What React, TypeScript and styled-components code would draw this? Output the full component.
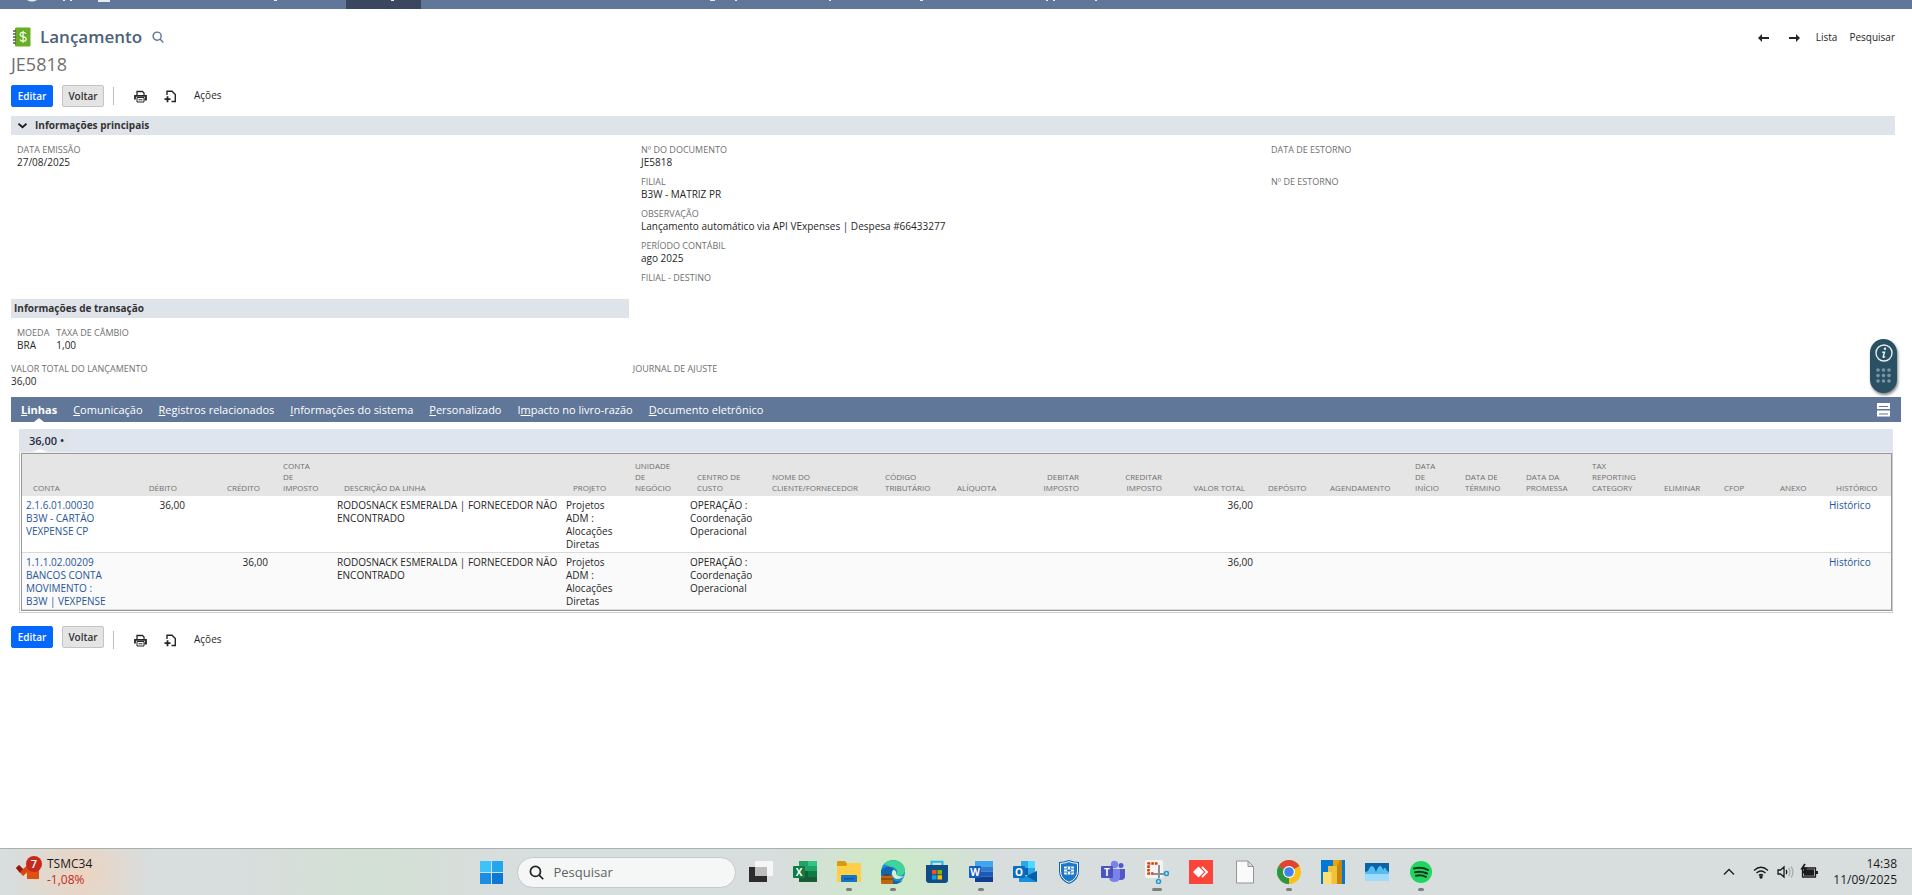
import React from 'react';
import styled, { createGlobalStyle, css } from 'styled-components';

const GlobalStyle = createGlobalStyle`
    * {
        box-sizing: border-box;
    }
    body {
        margin: 0;
        background: #fff;
        color: #262626;
        font-family: 'Open Sans', 'Noto Sans', sans-serif;
        font-size: 10px;
        line-height: 13px;
    }
    button, input {
        font-family: inherit;
    }
    svg {
        display: block;
    }
`;

const Page = styled.div`
    display: flex;
    flex-direction: column;
    min-height: 100vh;
    position: relative;
`;

const TopBar = styled.nav`
    height: 9px;
    background: #607799;
    overflow: hidden;
`;

const Content = styled.main`
    flex: 1;
    padding: 0 11px;
`;

const HeaderRow = styled.header`
    display: flex;
    justify-content: space-between;
    align-items: center;
    height: 27px;
    margin: 14px 6px 0 2px;
`;

const TitleGroup = styled.div`
    display: flex;
    align-items: center;
`;

const Title = styled.h1`
    margin: 0 10px 0 9px;
    font-size: 17px;
    line-height: 24px;
    font-weight: 600;
    color: #4d5f79;
`;

const Pager = styled.div`
    display: flex;
    align-items: center;
    gap: 12px;
    padding-top: 2px;
`;

const IconButton = styled.button`
    display: flex;
    padding: 0;
    border: 0;
    background: none;
    color: #262626;
`;

const PagerLink = styled.a`
    color: #262626;
    text-decoration: none;
    font-size: 10px;
`;

const RecordName = styled.div`
    height: 29px;
    margin-bottom: 6px;
    font-size: 18px;
    line-height: 29px;
    color: #6f6f6f;
`;

const Actions = styled.div`
    display: flex;
    align-items: center;
    height: 22px;
`;

const ActionButton = styled.button<{ $primary?: boolean }>`
    height: 22px;
    width: 42px;
    padding: 0;
    margin-right: 9px;
    border: 1px solid #c4c4c4;
    border-radius: 2px;
    background: #e4e4e4;
    color: #333;
    font-size: 10px;
    line-height: 20px;
    font-weight: 600;
    ${props => props.$primary && css`
        border-color: #0568fd;
        background: #0568fd;
        color: #fff;
    `}
`;

const Tools = styled.div<{ $low?: boolean }>`
    display: flex;
    align-items: center;
    height: 18px;
    padding-left: 20px;
    gap: 17px;
    border-left: 1px solid #c0c0c0;
    ${props => props.$low && css`
        align-self: flex-end;
        margin-bottom: -1px;
    `}
`;

const MenuButton = styled(IconButton)`
    padding-bottom: 2px;
    font-size: 10px;
    line-height: 13px;
`;

const SectionTitle = styled.h2<{ $half?: boolean }>`
    display: flex;
    align-items: center;
    height: 19px;
    margin: 0;
    padding: 0 7px;
    gap: 8px;
    background: #dfe3ea;
    font-size: 10px;
    line-height: 19px;
    font-weight: 700;
    color: #333;
    ${props => props.$half && css`
        width: calc(33% - 4px);
        padding: 0 3px;
    `}
`;

const Main = styled.div`
    padding: 9px 6px 0 0;
`;

const Columns = styled.div`
    display: grid;
    grid-template-columns: 104fr 105fr 103fr;
    height: 164px;
    padding: 8px 6px 0;
`;

const Pair = styled.div`
    display: grid;
    grid-template-columns: 33fr 67fr;
    margin: 4px 0 3px;
`;

const Inline = styled.div`
    display: flex;
    gap: 7px;
    padding: 8px 6px 0;
`;

const FieldBox = styled.dl`
    margin: 0;
    height: 32px;
`;

const FieldLabel = styled.dt`
    font-size: 9px;
    color: #6f6f6f;
`;

const FieldValue = styled.dd`
    margin: 0;
    color: #262626;
`;

const Tabs = styled.div`
    display: flex;
    align-items: center;
    justify-content: space-between;
    height: 25px;
    padding: 0 11px 0 10px;
    background: #607799;
`;

const TabList = styled.div`
    display: flex;
    gap: 16px;
`;

const Tab = styled.a<{ $active?: boolean }>`
    position: relative;
    color: #fff;
    font-size: 11px;
    line-height: 25px;
    text-decoration: none;
    ${props => props.$active && css`
        font-weight: 700;
        &::after {
            content: '';
            position: absolute;
            left: 50%;
            bottom: 0;
            margin-left: -5px;
            border: 5px solid transparent;
            border-top: 0;
            border-bottom: 4px solid #fff;
        }
    `}
`;

const Sublist = styled.section`
    padding: 7px 8px 0;
`;

const SubTabs = styled.div`
    height: 23px;
    background: #dfe5ef;
`;

const SubTab = styled.a`
    position: relative;
    display: block;
    width: 51px;
    height: 23px;
    padding-left: 10px;
    background: #dfe3ea;
    color: #262e45;
    font-size: 11px;
    line-height: 24px;
    font-weight: 600;
    text-decoration: none;
    white-space: nowrap;
    &::after {
        content: '';
        position: absolute;
        left: 13px;
        bottom: 0;
        border: 8px solid transparent;
        border-top: 0;
        border-bottom: 3px solid #fff;
    }
`;

const TableFrame = styled.div`
    padding: 0 1px 1px;
    border: 1px solid #ccc;
    border-top-color: #eee;
    margin-bottom: 13px;
`;

const Table = styled.table`
    width: 100%;
    table-layout: fixed;
    border-collapse: separate;
    border-spacing: 0;
    border: 1px solid #999;
`;

const HeadCell = styled.th<{ $right?: boolean }>`
    height: 42px;
    padding: 0 12px 3px 11px;
    background: #e5e5e5;
    color: #6f6f6f;
    font-size: 8px;
    line-height: 11px;
    font-weight: 400;
    text-align: ${props => (props.$right ? 'right' : 'left')};
    vertical-align: bottom;
    white-space: pre;
`;

const Cell = styled.td<{ $right?: boolean; $alt?: boolean }>`
    height: 57px;
    padding: 3px 4px 1px;
    border-bottom: 1px solid #d9d9d9;
    background: ${props => (props.$alt ? '#fafafa' : '#fff')};
    text-align: ${props => (props.$right ? 'right' : 'left')};
    vertical-align: top;
    white-space: pre;
`;

const CellLink = styled.a`
    color: #255599;
    text-decoration: none;
`;

const HelpPill = styled.aside`
    position: absolute;
    top: 339px;
    right: 15px;
    display: flex;
    flex-direction: column;
    align-items: center;
    gap: 6px;
    width: 27px;
    height: 54px;
    padding-top: 5px;
    border-radius: 14px;
    background: #2a5163;
    box-shadow: 1px 2px 3px rgba(0, 0, 0, 0.5);
`;

const TaskBar = styled.footer`
    display: grid;
    grid-template-columns: 1fr auto 1fr;
    height: 47px;
    border-top: 1px solid #a9b0b0;
    background:
        radial-gradient(circle at 80px 24px, rgba(244, 208, 180, 0.7), transparent 70px),
        radial-gradient(circle at 890px 20px, rgba(200, 238, 190, 0.8), transparent 110px),
        radial-gradient(circle at 370px 30px, rgba(208, 226, 208, 0.7), transparent 130px),
        #d8dddd;
`;

const Widget = styled.div`
    display: flex;
    gap: 5px;
    padding: 7px 0 0 15px;
    font-size: 12px;
    line-height: 16px;
    color: #1b1b1b;
`;

const Loss = styled.div`
    color: #c42b1c;
`;

const Dock = styled.div`
    display: flex;
    align-items: center;
`;

const AppButton = styled.button<{ $mark?: number }>`
    position: relative;
    display: flex;
    align-items: center;
    justify-content: center;
    width: 44px;
    height: 46px;
    padding: 0;
    border: 0;
    background: none;
    &::after {
        content: '';
        position: absolute;
        bottom: 4px;
        width: ${props => props.$mark || 0}px;
        height: 3px;
        border-radius: 2px;
        background: #7b7f7e;
    }
`;

const SearchBox = styled.label`
    display: flex;
    align-items: center;
    gap: 10px;
    width: 219px;
    height: 31px;
    margin: 0 3px 0 3px;
    padding: 0 11px;
    border: 1px solid #c3cbc8;
    border-radius: 16px;
    background: #f5f7f6;
`;

const SearchInput = styled.input`
    width: 150px;
    padding: 0;
    border: 0;
    outline: 0;
    background: none;
    font-size: 13px;
    color: #5f6261;
    &::placeholder {
        color: #5f6261;
        opacity: 1;
    }
`;

const Tray = styled.div`
    display: flex;
    align-items: center;
    justify-content: flex-end;
    padding-right: 15px;
`;

const Clock = styled.time`
    margin-left: 14px;
    font-size: 12px;
    line-height: 16px;
    text-align: right;
    color: #1b1b1b;
`;

interface Column {
    title: string;
    width: number;
    right?: boolean;
}

const columns: Column[] = [
    { title: 'CONTA', width: 85 },
    { title: 'DÉBITO', width: 82, right: true },
    { title: 'CRÉDITO', width: 83, right: true },
    { title: 'CONTA\nDE\nIMPOSTO', width: 61 },
    { title: 'DESCRIÇÃO DA LINHA', width: 229 },
    { title: 'PROJETO', width: 62 },
    { title: 'UNIDADE\nDE\nNEGÓCIO', width: 62 },
    { title: 'CENTRO DE\nCUSTO', width: 75 },
    { title: 'NOME DO\nCLIENTE/FORNECEDOR', width: 113 },
    { title: 'CÓDIGO\nTRIBUTÁRIO', width: 72 },
    { title: 'ALÍQUOTA', width: 63 },
    { title: 'DEBITAR\nIMPOSTO', width: 82, right: true },
    { title: 'CREDITAR\nIMPOSTO', width: 83, right: true },
    { title: 'VALOR TOTAL', width: 83, right: true },
    { title: 'DEPÓSITO', width: 62 },
    { title: 'AGENDAMENTO', width: 85 },
    { title: 'DATA\nDE\nINÍCIO', width: 50 },
    { title: 'DATA DE\nTÉRMINO', width: 61 },
    { title: 'DATA DA\nPROMESSA', width: 66 },
    { title: 'TAX\nREPORTING\nCATEGORY', width: 72 },
    { title: 'ELIMINAR', width: 60 },
    { title: 'CFOP', width: 56 },
    { title: 'ANEXO', width: 56 },
    { title: 'HISTÓRICO', width: 66 },
];

// cells by column title, columns without a value stay empty
const lines: Record<string, string>[] = [
    {
        'CONTA': '2.1.6.01.00030\nB3W - CARTÃO\nVEXPENSE CP',
        'DÉBITO': '36,00',
        'DESCRIÇÃO DA LINHA': 'RODOSNACK ESMERALDA | FORNECEDOR NÃO\nENCONTRADO',
        'PROJETO': 'Projetos\nADM :\nAlocações\nDiretas',
        'CENTRO DE\nCUSTO': 'OPERAÇÃO :\nCoordenação\nOperacional',
        'VALOR TOTAL': '36,00',
        'HISTÓRICO': 'Histórico',
    },
    {
        'CONTA': '1.1.1.02.00209\nBANCOS CONTA\nMOVIMENTO :\nB3W | VEXPENSE',
        'CRÉDITO': '36,00',
        'DESCRIÇÃO DA LINHA': 'RODOSNACK ESMERALDA | FORNECEDOR NÃO\nENCONTRADO',
        'PROJETO': 'Projetos\nADM :\nAlocações\nDiretas',
        'CENTRO DE\nCUSTO': 'OPERAÇÃO :\nCoordenação\nOperacional',
        'VALOR TOTAL': '36,00',
        'HISTÓRICO': 'Histórico',
    },
];

const tabs: [string, string, string][] = [
    ['', 'L', 'inhas'],
    ['', 'C', 'omunicação'],
    ['', 'R', 'egistros relacionados'],
    ['', 'I', 'nformações do sistema'],
    ['', 'P', 'ersonalizado'],
    ['I', 'm', 'pacto no livro-razão'],
    ['', 'D', 'ocumento eletrônico'],
];

function Field({ label, value }: { label: string; value?: string }) {
    return (
        <FieldBox>
            <FieldLabel>{label}</FieldLabel>
            <FieldValue>{value}</FieldValue>
        </FieldBox>
    );
}

function PrinterIcon() {
    return (
        <svg width="13" height="13" viewBox="0 0 13 13" fill="none" stroke="#262626">
            <path d="M3 5V1.5h5.500L10 3v2" strokeWidth="1.300" />
            <path d="M1 9.500V5.800h11v3.700h-1.500" strokeWidth="1.800" />
            <path d="M3 7.500h7v4.500H3z" fill="#fff" />
            <path d="M4.500 9.800h4" />
        </svg>
    );
}

function NewDocIcon() {
    return (
        <svg width="13" height="13" viewBox="0 0 13 13" fill="none" stroke="#262626" strokeWidth="1.400">
            <path d="M3 5V1.200h5l3.300 3.300v7H7.500" />
            <path d="M0.500 9.200h6M3.500 6.200v6" strokeWidth="1.800" />
        </svg>
    );
}

function ActionBar({ low }: { low?: boolean }) {
    return (
        <Actions>
            <ActionButton type="button" $primary>Editar</ActionButton>
            <ActionButton type="button">Voltar</ActionButton>
            <Tools $low={low}>
                <IconButton type="button" aria-label="Imprimir"><PrinterIcon /></IconButton>
                <IconButton type="button" aria-label="Criar novo"><NewDocIcon /></IconButton>
                <MenuButton type="button">Ações</MenuButton>
            </Tools>
        </Actions>
    );
}

function LedgerIcon() {
    return (
        <svg width="18" height="20" viewBox="0 0 18 20">
            <rect x="2" y="0.500" width="15.500" height="19" rx="1" fill="#68ad22" />
            <path d="M0 4h3M0 7h3M0 10h3M0 13h3M0 16h3" stroke="#55585c" strokeWidth="1.400" />
            <path
                d="M13 6.800c-.6-1.100-1.600-1.500-2.900-1.500-1.800 0-2.900.8-2.900 2.100 0 3.100 6 1.400 6 4.600 0 1.500-1.300 2.300-3.100 2.300-1.500 0-2.700-.6-3.200-1.800M10.100 3.800v12"
                fill="none"
                stroke="#eef7dd"
                strokeWidth="1.300"
            />
        </svg>
    );
}

function SearchIcon({ size, color, width }: { size: number; color: string; width: number }) {
    return (
        <svg width={size} height={size} viewBox="0 0 14 14" fill="none" stroke={color} strokeWidth={width}>
            <circle cx="6" cy="6" r="4.700" />
            <path d="M9.300 9.300l4 4" />
        </svg>
    );
}

function Arrow({ back }: { back?: boolean }) {
    return (
        <svg width="18" height="10" viewBox="0 0 18 10">
            <path
                d={back ? 'M2 5l4-4v3H13v2H6v3z' : 'M14 5l-4-4v3H3v2h7v3z'}
                fill="#262626"
            />
        </svg>
    );
}

function LayoutIcon() {
    return (
        <svg width="13" height="14" viewBox="0 0 13 14">
            <path d="M0 0h13v6H0zM0 7.500h13v6H0z" fill="#fff" />
            <path d="M2 3.500h9M2 11h9" stroke="#607799" strokeWidth="1.200" />
        </svg>
    );
}

function InfoIcon() {
    return (
        <svg width="18" height="18" viewBox="0 0 18 18" fill="none" stroke="#e6edf0">
            <circle cx="9" cy="9" r="8" strokeWidth="1.400" />
            <circle cx="10" cy="4.800" r="1.200" fill="#e6edf0" stroke="none" />
            <path d="M7.200 8.200h2.300l-1.300 4.600c-.1.700.8.600 1.700-.3" strokeWidth="1.500" />
        </svg>
    );
}

function DotsIcon() {
    return (
        <svg width="15" height="15" viewBox="0 0 15 15" fill="#7c97a4">
            {[2, 7.5, 13].map(y => [2, 7.5, 13].map(x => (
                <circle key={`${x}-${y}`} cx={x} cy={y} r="1.800" />
            )))}
        </svg>
    );
}

// tails of the menu labels that stick out under the fold
const menuTails = [
    [63, 2], [70, 2], [98, 12], [274, 3], [391, 3], [710, 5], [735, 2], [829, 2], [920, 3], [1046, 2], [1053, 2], [1095, 2],
];

function MenuTails() {
    return (
        <svg width="1120" height="9" viewBox="0 0 1120 9" fill="#e6ebf2">
            <path d="M346 0h75v9h-75z" fill="#3b475f" />
            <path d="M27 0h10q-5 3-10 0z" />
            {menuTails.map(([x, w]) => (
                <rect key={x} x={x} y="0" width={w} height={w > 8 ? 2 : 1} />
            ))}
        </svg>
    );
}

// square with a letter, in front of the office icons
function Badge({ letter, color }: { letter: string; color: string }) {
    return (
        <>
            <rect y="6" width="12" height="12" rx="1" fill={color} />
            <text x="6" y="16" fill="#fff" fontSize="10" fontWeight="700" textAnchor="middle">{letter}</text>
        </>
    );
}

const appIcons: { name: string; mark?: number; art: React.ReactNode }[] = [
    {
        name: 'Visão de tarefas',
        art: <><path d="M0 7h18v15H0z" fill="#2c2c2c" /><path d="M6 1h18v15H6z" fill="#f6f6f6" /><path d="M6 7h12v9H6z" fill="#bdbdbd" /></>,
    },
    {
        name: 'Excel',
        art: (
            <>
                <path d="M6 1h18v21H6z" fill="#21a366" />
                <path d="M15 1h9v5h-9z" fill="#33c481" />
                <path d="M6 11h9v11H6z" fill="#185c37" />
                <path d="M15 11h9v6h-9z" fill="#107c41" />
                <path d="M15 17h9v5h-9z" fill="#185c37" />
                <Badge letter="X" color="#107c41" />
            </>
        ),
    },
    {
        name: 'Explorador de Arquivos',
        mark: 6,
        art: (
            <>
                <path d="M0 2q0-1 1-1h7l2.500 3H24v6H0z" fill="#d89b10" />
                <path d="M0 6h9l2-3h13v19H0z" fill="#ffcf48" />
                <path d="M4 22v-6q0-1 1-1h14q1 0 1 1v6z" fill="#1575c9" />
                <path d="M7 18h10v1.500H7z" fill="#0b57a2" />
            </>
        ),
    },
    {
        name: 'Edge',
        mark: 6,
        art: (
            <>
                <circle cx="12" cy="12" r="12" fill="#1c8fd6" />
                <path d="M3 4C8-2 23-1 24 10c0 5-5 7-9 5 3-4 0-8-5-8z" fill="#3fd49a" />
                <path d="M0 11c2-5 11-6 13-1-4 1-4 9 2 11 3 1 6 0 7-1-3 4-10 6-15 3-5-3-8-7-7-12z" fill="#1464ac" />
                <path d="M12 10c-2 3-1 8 4 9 3 0 6-2 7-3-3 1-7 0-8-2 1-2-1-4-3-4z" fill="#d7efcf" />
                <rect y="16" width="12" height="8" rx="1" fill="#c2670c" />
                <path d="M0 19h12M4 16v-1.500h4V16" stroke="#6e3706" fill="none" />
            </>
        ),
    },
    {
        name: 'Microsoft Store',
        art: (
            <>
                <path d="M6.500 7V1.800h11V7" fill="none" stroke="#27b8ee" strokeWidth="2" />
                <path d="M1 5h22v15q0 3-3 3H4q-3 0-3-3z" fill="#124c86" />
                <path d="M7 10h4.500v4.300H7z" fill="#f25022" />
                <path d="M12.500 10H17v4.300h-4.500z" fill="#7fba00" />
                <path d="M7 15.200h4.500v4.300H7z" fill="#00a4ef" />
                <path d="M12.500 15.200H17v4.300h-4.500z" fill="#ffb900" />
            </>
        ),
    },
    {
        name: 'Word',
        mark: 6,
        art: (
            <>
                <path d="M6 1h18v5.500H6z" fill="#41a5ee" />
                <path d="M6 6.500h18v5H6z" fill="#2b7cd3" />
                <path d="M6 11.500h18v5H6z" fill="#185abd" />
                <path d="M6 16.500h18V22H6z" fill="#103f91" />
                <Badge letter="W" color="#185abd" />
            </>
        ),
    },
    {
        name: 'Outlook',
        art: (
            <>
                <path d="M8 1h14v14H8z" fill="#28a8ea" />
                <path d="M15 1h7v7h-7z" fill="#50d9ff" />
                <path d="M8 8h7v7H8z" fill="#0364b8" />
                <path d="M6 22h18V11l-9 6-9-5z" fill="#1490df" />
                <path d="M24 11v11L13 16z" fill="#0a5ea8" />
                <Badge letter="O" color="#0f6cbd" />
            </>
        ),
    },
    {
        name: 'FortiClient',
        art: (
            <>
                <path d="M2 2q5 0 10-2 5 2 10 2v9q0 9-10 13Q2 20 2 11z" fill="#1462a8" />
                <path d="M3.500 3.300q4.500 0 8.500-1.700 4 1.700 8.500 1.700V11q0 8-8.500 11.300Q3.500 19 3.500 11z" fill="#1c78c8" stroke="#fff" />
                <rect x="7" y="6.500" width="10" height="8" rx="1" fill="#fff" />
                <path d="M10.300 6.500v2.500M13.700 6.500v2.500M7 9h3.500M13.500 9H17M7 12h3.500M13.500 12H17M10.300 12v2.500M13.700 12v2.500" stroke="#1c78c8" />
                <path d="M10 9.500h4v2h-4z" fill="#1c78c8" />
            </>
        ),
    },
    {
        name: 'Teams',
        art: (
            <>
                <circle cx="20" cy="5.500" r="2.500" fill="#5059c9" />
                <circle cx="13.500" cy="4.500" r="3.700" fill="#7b83eb" />
                <path d="M17 9h7v7q0 4-4 4h-3z" fill="#5059c9" />
                <path d="M8 9h11v8q0 5-5.500 5T8 17z" fill="#7b83eb" />
                <Badge letter="T" color="#4b53bc" />
            </>
        ),
    },
    {
        name: 'Ferramenta de Captura',
        mark: 10,
        art: (
            <>
                <rect width="18" height="18" rx="2" fill="#f4f4f4" />
                <path d="M12.500 3.500H3.500v10h5" fill="none" stroke="#d83b01" strokeWidth="2.600" strokeDasharray="2.600 1" />
                <path d="M14 5v13M8 14h12" stroke="#8b8f92" strokeWidth="2" />
                <circle cx="21.500" cy="13.500" r="2" fill="none" stroke="#1f9ad6" strokeWidth="1.600" />
                <circle cx="13.500" cy="21.500" r="2" fill="none" stroke="#1f9ad6" strokeWidth="1.600" />
            </>
        ),
    },
    {
        name: 'AnyDesk',
        art: (
            <>
                <path d="M0 0h24v24H0z" fill="#fb4539" />
                <path d="M9.500 6.500L15 12l-5.500 5.500L4 12z" fill="#fff" />
                <path d="M13 7l5 5-5 5" fill="none" stroke="#fff" strokeWidth="1.800" />
            </>
        ),
    },
    {
        name: 'Arquivo',
        art: <path d="M3.500 1h11.500l5.500 5.500V23h-17zM15 1v5.500h5.500" fill="#fafafa" stroke="#929695" />,
    },
    {
        name: 'Chrome',
        mark: 6,
        art: (
            <>
                <circle cx="12" cy="12" r="12" fill="#fbc116" />
                <path d="M12 12L1.600 6A12 12 0 0 1 22.400 6z" fill="#df4432" />
                <path d="M12 12l0 12A12 12 0 0 1 1.600 6z" fill="#2b9746" />
                <path d="M12 12L17 14.500 12 24z" fill="#fbc116" />
                <circle cx="12" cy="12" r="6" fill="#fff" />
                <circle cx="12" cy="12" r="4.800" fill="#4083ee" />
            </>
        ),
    },
    {
        name: 'Power BI',
        art: (
            <>
                <path d="M0 0h24v24H0z" fill="#0078d4" />
                <path d="M12 0h9v24h-9z" fill="#e2a60c" />
                <path d="M7 6h9v18H7z" fill="#f0c13a" />
                <path d="M2 12h8.500v12H2z" fill="#fbdf73" />
                <path d="M16 6v18h5V0h-2z" fill="#c9850a" />
            </>
        ),
    },
    {
        name: 'Monitor',
        art: (
            <>
                <path d="M0 3h24v18H0z" fill="#0b63a6" />
                <path d="M0 12q3 0 4-3 1-3 3-3t4 6q2-6 4-6t3 4q2-4 3-1 1 3 3 3v9H0z" fill="#56bdf2" />
                <path d="M0 14h24v7H0z" fill="#9fdcfb" />
            </>
        ),
    },
    {
        name: 'Spotify',
        mark: 6,
        art: (
            <>
                <circle cx="12" cy="12" r="11" fill="#1ed760" />
                <path d="M5 8.500q8-2 14 1.500M6 12.300q6.500-1.600 12 1.200M7 15.700q5.500-1.200 10 1.200" fill="none" stroke="#16351f" strokeWidth="2" strokeLinecap="round" />
            </>
        ),
    },
];

function Desktop() {
    return (
        <TaskBar>
            <Widget>
                <svg width="27" height="25" viewBox="0 0 27 25">
                    <path d="M1 12l3-3 4 4 8-7 2 5-10 9z" fill="#d9480f" />
                    <path d="M1 12l3-3 4 4-3 4z" fill="#8f1d16" />
                    <path d="M12 14h12v9H12z" fill="#e2500f" />
                    <circle cx="19" cy="8" r="8" fill="#c42b1c" />
                    <text x="19" y="12" fill="#fff" fontSize="11" fontWeight="600" textAnchor="middle">7</text>
                </svg>
                <div>
                    <div>TSMC34</div>
                    <Loss>-1,08%</Loss>
                </div>
            </Widget>
            <Dock>
                <AppButton type="button" aria-label="Iniciar">
                    <svg width="23" height="23" viewBox="0 0 23 23">
                        <path d="M0 0h11v11H0z" fill="#3ec2f8" />
                        <path d="M12 0h11v11H12z" fill="#22a6ec" />
                        <path d="M0 12h11v11H0z" fill="#1a8ee0" />
                        <path d="M12 12h11v11H12z" fill="#0a78d4" />
                    </svg>
                </AppButton>
                <SearchBox>
                    <SearchIcon size={15} color="#222" width={1.6} />
                    <SearchInput type="text" placeholder="Pesquisar" aria-label="Pesquisar" />
                </SearchBox>
                {appIcons.map(({ name, mark, art }) => (
                    <AppButton key={name} type="button" aria-label={name} $mark={mark}>
                        <svg width="24" height="24" viewBox="0 0 24 24">{art}</svg>
                    </AppButton>
                ))}
            </Dock>
            <Tray>
                <svg width="96" height="18" viewBox="0 0 96 18" fill="none" stroke="#1b1b1b" strokeWidth="1.300">
                    <path d="M1 11.500l5-5 5 5" />
                    <path d="M31 7.500q7-6.500 14 0M33.500 10q4.500-4 9 0M36 12.500q2-2 4 0" />
                    <circle cx="38" cy="14" r="1" fill="#1b1b1b" />
                    <path d="M55 7v4h2.500l3.500 3V4l-3.500 3zM63 7q1.500 2 0 4" />
                    <path d="M65.500 5q3 4 0 8M68 3.500q4 5.500 0 11" stroke="#a8adac" />
                    <path d="M79.500 5h13v9h-13z" strokeLinejoin="round" />
                    <path d="M81.500 7h9v5h-9z" fill="#1b1b1b" />
                    <path d="M94 8v3" strokeWidth="2" />
                    <path d="M82 1l-3 4.500h4L80 10" strokeWidth="1.800" />
                </svg>
                <Clock>14:38<br />11/09/2025</Clock>
            </Tray>
        </TaskBar>
    );
}

function LinesTable() {
    return (
        <TableFrame>
            <Table>
                <colgroup>
                    {columns.map(({ title, width }) => <col key={title} style={{ width }} />)}
                </colgroup>
                <thead>
                    <tr>
                        {columns.map(({ title, right }) => (
                            <HeadCell key={title} scope="col" $right={right}>{title}</HeadCell>
                        ))}
                    </tr>
                </thead>
                <tbody>
                    {lines.map((line, i) => (
                        <tr key={line['CONTA']}>
                            {columns.map(({ title, right }) => {
                                const isLink = title === 'CONTA' || title === 'HISTÓRICO';
                                return (
                                    <Cell key={title} $right={right} $alt={i % 2 === 1}>
                                        {isLink ? <CellLink href="#">{line[title]}</CellLink> : line[title]}
                                    </Cell>
                                );
                            })}
                        </tr>
                    ))}
                </tbody>
            </Table>
        </TableFrame>
    );
}

export default function App() {
    return (
        <Page>
            <GlobalStyle />
            <TopBar>
                <MenuTails />
            </TopBar>
            <Content>
                <HeaderRow>
                    <TitleGroup>
                        <LedgerIcon />
                        <Title>Lançamento</Title>
                        <IconButton type="button" aria-label="Pesquisa rápida">
                            <SearchIcon size={12} color="#607799" width={1.7} />
                        </IconButton>
                    </TitleGroup>
                    <Pager>
                        <IconButton type="button" aria-label="Anterior"><Arrow back /></IconButton>
                        <IconButton type="button" aria-label="Próximo"><Arrow /></IconButton>
                        <PagerLink href="#">Lista</PagerLink>
                        <PagerLink href="#">Pesquisar</PagerLink>
                    </Pager>
                </HeaderRow>
                <RecordName>JE5818</RecordName>
                <ActionBar />
                <Main>
                    <SectionTitle>
                        <svg width="9" height="6" viewBox="0 0 9 6" fill="none" stroke="#1b1b1b" strokeWidth="1.800">
                            <path d="M0.500 0.800l4 3.500 4-3.500" />
                        </svg>
                        Informações principais
                    </SectionTitle>
                    <Columns>
                        <div>
                            <Field label="DATA EMISSÃO" value="27/08/2025" />
                        </div>
                        <div>
                            <Field label="Nº DO DOCUMENTO" value="JE5818" />
                            <Field label="FILIAL" value="B3W - MATRIZ PR" />
                            <Field label="OBSERVAÇÃO" value="Lançamento automático via API VExpenses | Despesa #66433277" />
                            <Field label="PERÍODO CONTÁBIL" value="ago 2025" />
                            <Field label="FILIAL - DESTINO" />
                        </div>
                        <div>
                            <Field label="DATA DE ESTORNO" />
                            <Field label="Nº DE ESTORNO" />
                        </div>
                    </Columns>
                    <SectionTitle $half>Informações de transação</SectionTitle>
                    <Inline>
                        <Field label="MOEDA" value="BRA" />
                        <Field label="TAXA DE CÂMBIO" value="1,00" />
                    </Inline>
                    <Pair>
                        <Field label="VALOR TOTAL DO LANÇAMENTO" value="36,00" />
                        <Field label="JOURNAL DE AJUSTE" />
                    </Pair>
                </Main>
                <Tabs>
                    <TabList>
                        {tabs.map(([before, key, after]) => (
                            <Tab key={after} href="#" $active={after === 'inhas'}>{before}<u>{key}</u>{after}</Tab>
                        ))}
                    </TabList>
                    <IconButton type="button" aria-label="Exibir seções"><LayoutIcon /></IconButton>
                </Tabs>
                <Sublist>
                    <SubTabs>
                        <SubTab href="#">36,00 •</SubTab>
                    </SubTabs>
                    <LinesTable />
                </Sublist>
                <ActionBar low />
            </Content>
            <Desktop />
            <HelpPill>
                <InfoIcon />
                <DotsIcon />
            </HelpPill>
        </Page>
    );
}
